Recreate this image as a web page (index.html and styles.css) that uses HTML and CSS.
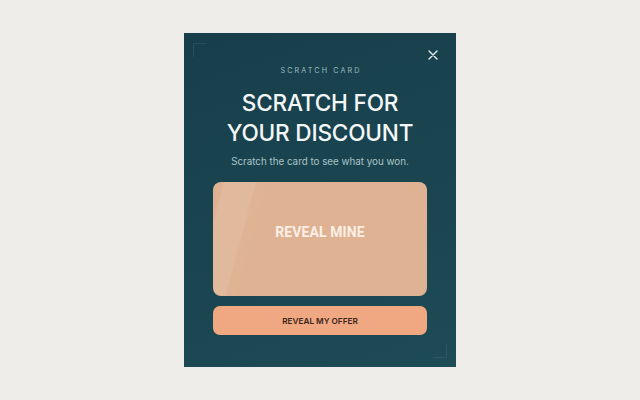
FILE: index.html
```html
<!DOCTYPE html>
<html>
<head>
<meta charset="utf-8">
<link rel="stylesheet" href="styles.css">
</head>
<body>
<div class="stage">
  <div class="card">
    <span class="corner corner-tl"></span>
    <span class="corner corner-br"></span>
    <button class="close" aria-label="Close">
      <svg width="10" height="10" viewBox="0 0 10 10"><path d="M1 1L9 9M9 1L1 9" stroke="#e6eef0" stroke-width="1.4" stroke-linecap="round"/></svg>
    </button>
    <div class="eyebrow">SCRATCH CARD</div>
    <h1 class="title">SCRATCH FOR<br>YOUR DISCOUNT</h1>
    <p class="sub">Scratch the card to see what you won.</p>
    <div class="scratch"><span>REVEAL MINE</span></div>
    <button class="cta">REVEAL MY OFFER</button>
  </div>
</div>
</body>
</html>
```
FILE: styles.css
```css
* { box-sizing: border-box; }
html, body { margin: 0; padding: 0; }
body {
  width: 640px;
  height: 400px;
  background: #efedea;
  font-family: Inter, "Liberation Sans", sans-serif;
}
.stage {
  width: 640px;
  height: 400px;
  display: flex;
  justify-content: center;
  padding-top: 33px;
}
.card {
  position: relative;
  width: 272px;
  height: 334px;
  background: linear-gradient(160deg, #173f4b 0%, #1a4550 55%, #1d4b56 100%);
  padding: 33px 29px 0;
  display: flex;
  flex-direction: column;
  align-items: stretch;
}
.corner {
  position: absolute;
  width: 14px;
  height: 14px;
  border-color: rgba(255,255,255,0.07);
  border-style: solid;
  border-width: 0;
}
.corner-tl { left: 9px; top: 10px; border-top-width: 1px; border-left-width: 1px; }
.corner-br { right: 9px; bottom: 9px; border-bottom-width: 1px; border-right-width: 1px; }
.close {
  position: absolute;
  top: 17px;
  right: 18px;
  width: 10px;
  height: 10px;
  padding: 0;
  border: 0;
  background: none;
  display: flex;
}
.eyebrow {
  text-align: center;
  font-size: 7.2px;
  letter-spacing: 2.1px;
  padding-left: 2px;
  color: #9dbcc0;
  line-height: 10px;
}
.title {
  margin: 12px 0 0;
  text-align: center;
  font-weight: 500;
  font-size: 22.6px;
  line-height: 30px;
  letter-spacing: -0.2px;
  color: #f4f7f7;
}
.sub {
  margin: 7px 0 0;
  text-align: center;
  font-size: 9.8px;
  line-height: 14px;
  color: #a9c4c7;
}
.scratch {
  margin-top: 13px;
  height: 114px;
  border-radius: 8px;
  padding-bottom: 14px;
  background:
    linear-gradient(105deg, rgba(255,255,255,0) 0%, rgba(255,255,255,0) 4%, rgba(255,255,255,0.10) 5%, rgba(255,255,255,0.10) 17%, rgba(255,255,255,0.03) 18%, rgba(255,255,255,0) 26%),
    #deb292;
  display: flex;
  align-items: center;
  justify-content: center;
}
.scratch span {
  font-family: Roboto, "Liberation Sans", sans-serif;
  font-weight: 700;
  font-size: 14px;
  color: #fbefe6;
  letter-spacing: 0.1px;
}
.cta {
  margin-top: 10px;
  height: 29px;
  border: 0;
  border-radius: 7px;
  background: #efa882;
  font-family: Inter, "Liberation Sans", sans-serif;
  font-weight: 600;
  font-size: 8.2px;
  color: #3b241a;
  letter-spacing: 0;
}
```
